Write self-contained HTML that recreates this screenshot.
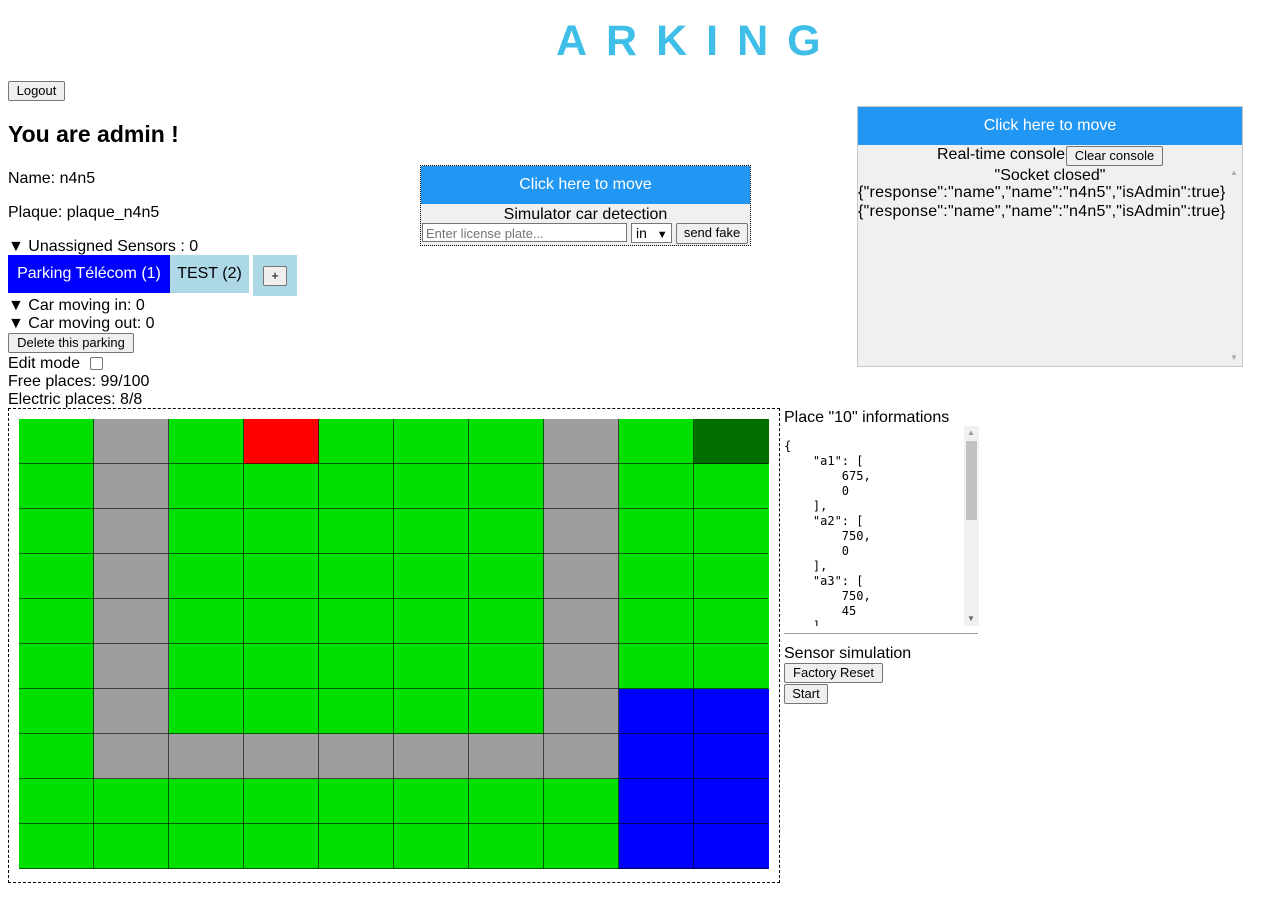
<!DOCTYPE html>
<html><head><meta charset="utf-8">
<style>
body{margin:0;width:1281px;height:902px;background:#fff;font-family:"Liberation Sans",sans-serif;font-size:16px;color:#000;position:relative;overflow:hidden}
.a{position:absolute;white-space:nowrap}
.btn{position:absolute;background:#efefef;border:1px solid #767676;border-radius:2px;font-size:13px;font-family:"Liberation Sans",sans-serif;box-sizing:border-box;text-align:center;line-height:17px;color:#000}
.grid{position:absolute;left:19px;top:419px;width:750px;height:450px;display:grid;grid-template-columns:repeat(10,75px);grid-template-rows:repeat(10,45px)}
.g{background:#00e000}.s{background:#9e9e9e}.r{background:#ff0000}.d{background:#006f00}.b{background:#0000ff}
.lines{position:absolute;left:19px;top:419px;width:749px;height:450px;background:repeating-linear-gradient(to right,transparent 0 74px,rgba(0,0,0,.6) 74px 75px),repeating-linear-gradient(to bottom,transparent 0 44px,rgba(0,0,0,.6) 44px 45px)}
pre{margin:0;font-family:"DejaVu Sans Mono",monospace;font-size:12px;line-height:15px}
</style></head><body>
<div class="a" style="left:556px;top:16px;font-size:43px;font-weight:bold;color:#3fbfe8;letter-spacing:19px;line-height:50px">ARKING</div>
<div class="btn" style="left:8px;top:81px;width:57px;height:20px">Logout</div>
<div class="a" style="left:8px;top:121px;font-size:23px;font-weight:bold">You are admin !</div>
<div class="a" style="left:8px;top:170px">Name: n4n5</div>
<div class="a" style="left:8px;top:204px">Plaque: plaque_n4n5</div>
<div class="a" style="left:8px;top:238px">▼ Unassigned Sensors : 0</div>
<div class="a" style="left:8px;top:255px;width:162px;height:38px;background:#0000ff;color:#fff;line-height:38px;text-align:center">Parking Télécom (1)</div>
<div class="a" style="left:170px;top:255px;width:79px;height:38px;background:#add8e6;line-height:38px;text-align:center">TEST (2)</div>
<div class="a" style="left:253px;top:255px;width:44px;height:41px;background:#add8e6"></div>
<div class="btn" style="left:263px;top:266px;width:24px;height:20px">+</div>
<div class="a" style="left:8px;top:297px">▼ Car moving in: 0</div>
<div class="a" style="left:8px;top:315px">▼ Car moving out: 0</div>
<div class="btn" style="left:8px;top:333px;width:126px;height:20px">Delete this parking</div>
<div class="a" style="left:8px;top:355px">Edit mode</div>
<div class="a" style="left:90px;top:357px;width:11px;height:11px;border:1px solid #767676;border-radius:2px"></div>
<div class="a" style="left:8px;top:373px">Free places: 99/100</div>
<div class="a" style="left:8px;top:391px">Electric places: 8/8</div>
<div class="a" style="left:8px;top:408px;width:770px;height:473px;border:1px dashed #000"></div>
<div class="grid">
<div class="g"></div><div class="s"></div><div class="g"></div><div class="r"></div><div class="g"></div><div class="g"></div><div class="g"></div><div class="s"></div><div class="g"></div><div class="d"></div>
<div class="g"></div><div class="s"></div><div class="g"></div><div class="g"></div><div class="g"></div><div class="g"></div><div class="g"></div><div class="s"></div><div class="g"></div><div class="g"></div>
<div class="g"></div><div class="s"></div><div class="g"></div><div class="g"></div><div class="g"></div><div class="g"></div><div class="g"></div><div class="s"></div><div class="g"></div><div class="g"></div>
<div class="g"></div><div class="s"></div><div class="g"></div><div class="g"></div><div class="g"></div><div class="g"></div><div class="g"></div><div class="s"></div><div class="g"></div><div class="g"></div>
<div class="g"></div><div class="s"></div><div class="g"></div><div class="g"></div><div class="g"></div><div class="g"></div><div class="g"></div><div class="s"></div><div class="g"></div><div class="g"></div>
<div class="g"></div><div class="s"></div><div class="g"></div><div class="g"></div><div class="g"></div><div class="g"></div><div class="g"></div><div class="s"></div><div class="g"></div><div class="g"></div>
<div class="g"></div><div class="s"></div><div class="g"></div><div class="g"></div><div class="g"></div><div class="g"></div><div class="g"></div><div class="s"></div><div class="b"></div><div class="b"></div>
<div class="g"></div><div class="s"></div><div class="s"></div><div class="s"></div><div class="s"></div><div class="s"></div><div class="s"></div><div class="s"></div><div class="b"></div><div class="b"></div>
<div class="g"></div><div class="g"></div><div class="g"></div><div class="g"></div><div class="g"></div><div class="g"></div><div class="g"></div><div class="g"></div><div class="b"></div><div class="b"></div>
<div class="g"></div><div class="g"></div><div class="g"></div><div class="g"></div><div class="g"></div><div class="g"></div><div class="g"></div><div class="g"></div><div class="b"></div><div class="b"></div>
</div>
<div class="lines"></div>
<!-- simulator -->
<div class="a" style="left:420px;top:165px;width:329px;height:79px;border:1px dotted #000;background:#f0f0f0"></div>
<div class="a" style="left:421px;top:166px;width:329px;height:38px;background:#2196f3;color:#fff;line-height:38px;text-align:center">Click here to move</div>
<div class="a" style="left:421px;top:206px;width:329px;text-align:center">Simulator car detection</div>
<div class="a" style="left:422px;top:223px;height:19px;background:#fff;border:1px solid #767676;font-size:13px;color:#757575;line-height:19px;padding-left:3px;box-sizing:border-box;width:205px">Enter license plate...</div>
<div class="a" style="left:631px;top:223px;width:41px;height:20px;background:#fff;border:1px solid #767676;font-size:14px;line-height:18px;padding-left:4px;box-sizing:border-box">in <span style="font-size:11px;margin-left:6px">▼</span></div>
<div class="btn" style="left:676px;top:223px;width:72px;height:21px">send fake</div>
<!-- console -->
<div class="a" style="left:857px;top:106px;width:384px;height:259px;border:1px solid #c8c8c8;background:#f0f0f0"></div>
<div class="a" style="left:858px;top:107px;width:384px;height:38px;background:#2196f3;color:#fff;line-height:38px;text-align:center">Click here to move</div>
<div class="a" style="left:937px;top:146px">Real-time console</div>
<div class="btn" style="left:1066px;top:146px;width:97px;height:20px">Clear console</div>
<div class="a" style="left:858px;top:167px;width:384px;text-align:center">"Socket closed"</div>
<div class="a" style="left:858px;top:184px;letter-spacing:0.25px">{"response":"name","name":"n4n5","isAdmin":true}</div>
<div class="a" style="left:858px;top:203px;letter-spacing:0.25px">{"response":"name","name":"n4n5","isAdmin":true}</div>
<div class="a" style="left:1230px;top:168px;font-size:8px;color:#aaa">▲</div>
<div class="a" style="left:1230px;top:353px;font-size:8px;color:#aaa">▼</div>
<!-- place info -->
<div class="a" style="left:784px;top:409px">Place "10" informations</div>
<div class="a" style="left:784px;top:426px;width:180px;height:200px;overflow:hidden">
<pre style="padding-top:13px">{
    "a1": [
        675,
        0
    ],
    "a2": [
        750,
        0
    ],
    "a3": [
        750,
        45
    ]</pre></div>
<div class="a" style="left:964px;top:426px;width:15px;height:200px;background:#f1f1f1"></div>
<div class="a" style="left:966px;top:441px;width:11px;height:79px;background:#c1c1c1"></div>
<div class="a" style="left:967px;top:428px;font-size:8px;color:#999">▲</div>
<div class="a" style="left:967px;top:614px;font-size:8px;color:#666">▼</div>
<div class="a" style="left:784px;top:633px;width:194px;height:1px;background:#999"></div>
<div class="a" style="left:784px;top:645px">Sensor simulation</div>
<div class="btn" style="left:784px;top:663px;width:99px;height:20px">Factory Reset</div>
<div class="btn" style="left:784px;top:684px;width:44px;height:20px">Start</div>
</body></html>
